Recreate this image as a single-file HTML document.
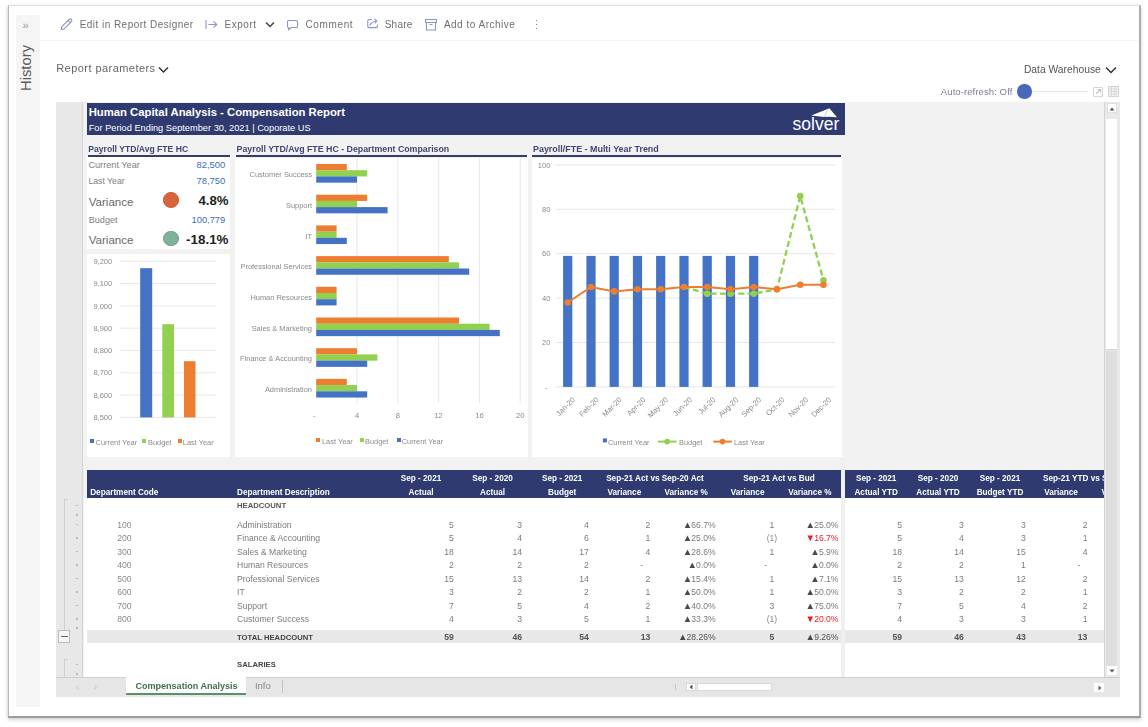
<!DOCTYPE html>
<html><head><meta charset="utf-8">
<style>
*{margin:0;padding:0;box-sizing:border-box}
html,body{width:1148px;height:727px;overflow:hidden;background:#fff;font-family:"Liberation Sans",sans-serif}
.a{position:absolute}
.t{position:absolute;white-space:nowrap;line-height:1}
svg{position:absolute;overflow:visible}
.tri{font-weight:400;font-size:9.6px;letter-spacing:-0.9px;color:#4a4a4a;line-height:0}
.red .tri{color:#e8202a}
</style></head><body><div id="w" style="position:absolute;left:0;top:0;width:1148px;height:727px;filter:blur(.55px)">
<div class="a" style="left:7.8px;top:5px;width:1132.8px;height:712.6px;background:#fff;border-left:1.7px solid #b6b6b6;border-right:2px solid #acacac;border-bottom:2.2px solid #9c9c9c;border-top:1px solid #e2e2e2;box-shadow:0 2px 4px rgba(0,0,0,.16),-1px 0 3px rgba(0,0,0,.08);filter:blur(.55px)"></div>
<div class="a" style="left:16.3px;top:15.0px;width:23.3px;height:692.3px;background:#f5f5f5;"></div>
<div class="t" style="left:22.5px;top:20px;color:#9a9a9a;font-size:11px">&raquo;</div>
<div class="t" style="left:18.5px;top:91.3px;color:#5a5a5a;font-size:14.8px;transform:rotate(-90deg);transform-origin:0 0">History</div>
<div class="a" style="left:40.0px;top:39.5px;width:1098.0px;height:1.0px;background:#f3f3f3;"></div>
<svg style="left:60px;top:18px" width="13" height="13" viewBox="0 0 13 13"><path d="M1.2 11.6L1.84 8.7L9.17 1.37A1.6 1.6 0 0 1 11.43 3.63L4.1 10.96Z M8.11 2.43L10.37 4.69" fill="none" stroke="#8a90bc" stroke-width="1.05" stroke-linejoin="round"/></svg>
<div class="t" style="left:79.7px;top:19.8px;font-size:10.0px;color:#6e6e6e;font-weight:400;letter-spacing:.46px">Edit in Report Designer</div>
<svg style="left:205px;top:19px" width="13" height="11" viewBox="0 0 13 11"><path d="M1 1V10M3.5 5.5H11.8M8.5 2.3L11.8 5.5L8.5 8.7" fill="none" stroke="#8d94c6" stroke-width="1.1"/></svg>
<div class="t" style="left:224.6px;top:19.8px;font-size:10.0px;color:#6e6e6e;font-weight:400;letter-spacing:.5px">Export</div>
<svg style="left:265px;top:20.5px" width="10" height="8" viewBox="0 0 10 8"><path d="M1 1.5L5 5.5L9 1.5" fill="none" stroke="#444" stroke-width="1.5"/></svg>
<svg style="left:286px;top:18.5px" width="13" height="13" viewBox="0 0 13 13"><path d="M2.6 1.5H10.4Q11.5 1.5 11.5 2.6V7.4Q11.5 8.5 10.4 8.5H5.2L2.6 10.9V8.5Q1.5 8.5 1.5 7.4V2.6Q1.5 1.5 2.6 1.5Z" fill="none" stroke="#8d94c6" stroke-width="1.1" stroke-linejoin="round"/></svg>
<div class="t" style="left:305.4px;top:19.8px;font-size:10.0px;color:#6e6e6e;font-weight:400;letter-spacing:.65px">Comment</div>
<svg style="left:366px;top:17px" width="13" height="13" viewBox="0 0 13 13"><path d="M6 2.5H2.8Q1.8 2.5 1.8 3.5V9.6Q1.8 10.6 2.8 10.6H10.4Q11.4 10.6 11.4 9.6V7.5M3.8 8.2Q5.5 4.6 10.5 4.2M8.4 1.8L10.8 4.1L8.8 6.4" fill="none" stroke="#8d94c6" stroke-width="1.1"/></svg>
<div class="t" style="left:384.7px;top:19.8px;font-size:10.0px;color:#6e6e6e;font-weight:400;letter-spacing:.25px">Share</div>
<svg style="left:425px;top:18px" width="12" height="13" viewBox="0 0 12 13"><path d="M0.5 1.5H11.5V4.5H0.5ZM1.5 4.5V12H10.5V4.5M4.5 6.5H7.5" fill="none" stroke="#8d94c6" stroke-width="1.1"/></svg>
<div class="t" style="left:443.9px;top:19.8px;font-size:10.0px;color:#6e6e6e;font-weight:400;letter-spacing:.5px">Add to Archive</div>
<div class="a" style="left:535.6px;top:19.5px;width:1.6px;height:1.6px;background:#888;box-shadow:0 4px 0 #888,0 8px 0 #888"></div>
<div class="t" style="left:56.2px;top:62.6px;font-size:11.0px;color:#666;font-weight:400;letter-spacing:.45px">Report parameters</div>
<svg style="left:158px;top:65.5px" width="11" height="8" viewBox="0 0 11 8"><path d="M1 1.5L5.5 6L10 1.5" fill="none" stroke="#333" stroke-width="1.5"/></svg>
<div class="t" style="left:1023.9px;top:65.4px;font-size:10.3px;color:#555;font-weight:400;">Data Warehouse</div>
<svg style="left:1105px;top:66px" width="12" height="8" viewBox="0 0 12 8"><path d="M1 1.5L6 6.5L11 1.5" fill="none" stroke="#333" stroke-width="1.5"/></svg>
<div class="t" style="left:940.8px;top:86.8px;font-size:9.6px;color:#7c8199;font-weight:400;letter-spacing:.05px">Auto-refresh: Off</div>
<div class="a" style="left:1030.0px;top:90.6px;width:58.0px;height:1.8px;background:#e4eaf5;"></div>
<div class="a" style="left:1017.4px;top:84.4px;width:14.5px;height:14.5px;border-radius:50%;background:#4868bb"></div>
<svg style="left:1093px;top:87px" width="10" height="10" viewBox="0 0 10 10"><path d="M0.5 0.5H9.5V9.5H0.5Z" fill="none" stroke="#d6d6d6"/><path d="M3 7L7.5 2.5M4.5 2.5H7.5V5.5" fill="none" stroke="#c4c4c4" stroke-width="1.1"/></svg>
<svg style="left:1108px;top:86px" width="11" height="11" viewBox="0 0 11 11"><rect x="0.5" y="0.5" width="10" height="10" fill="#f4f4f4" stroke="#d4d4d4"/><path d="M0.5 3H10.5M0.5 5.5H10.5M0.5 8H10.5M3.5 0.5V10.5M7 0.5V10.5" stroke="#d8d8d8" stroke-width="1"/></svg>
<div class="a" style="left:56.0px;top:102.0px;width:1064.0px;height:595.0px;background:#f2f2f2;"></div>
<div class="a" style="left:56.0px;top:102.0px;width:26.0px;height:576.0px;background:#e8e8e8;"></div>
<div class="a" style="left:81.8px;top:102.0px;width:1.2px;height:576.0px;background:#d4d4d4;"></div>
<div class="a" style="left:87.0px;top:103.0px;width:758.0px;height:32.0px;background:#2f3b70;"></div>
<div class="t" style="left:88.7px;top:106.9px;font-size:11.3px;color:#fff;font-weight:700;">Human Capital Analysis - Compensation Report</div>
<div class="t" style="left:88.7px;top:124.0px;font-size:9.25px;color:#fff;font-weight:400;">For Period Ending September 30, 2021 | Coporate US</div>
<div class="t" style="left:792.6px;top:116.2px;font-size:17.5px;color:#fff;font-weight:400;letter-spacing:0px">solver</div>
<svg style="left:811px;top:107px" width="28" height="12" viewBox="0 0 28 12"><path d="M0.3 8.5L18.4 1.2L26 10.3Q19 9.6 13.5 10Q6 9.3 0.3 8.5Z" fill="#fff"/><path d="M13.5 10L16.5 2.8" stroke="#b4bad4" stroke-width=".7"/></svg>
<div class="t" style="left:88.3px;top:145.3px;font-size:8.6px;color:#3d4772;font-weight:700;">Payroll YTD/Avg FTE HC</div>
<div class="a" style="left:88.0px;top:154.6px;width:142.0px;height:2.1px;background:#343e68;"></div>
<div class="a" style="left:87.0px;top:157.0px;width:143.0px;height:92.0px;background:#fff;"></div>
<div class="t" style="left:88.4px;top:160.8px;font-size:9.17px;color:#808080;font-weight:400;">Current Year</div>
<div class="t" style="right:922.8px;top:159.8px;font-size:9.4px;color:#3d6cc2;font-weight:400;text-align:right;">82,500</div>
<div class="t" style="left:88.4px;top:177.0px;font-size:8.7px;color:#808080;font-weight:400;">Last Year</div>
<div class="t" style="right:922.8px;top:176.0px;font-size:9.4px;color:#3d6cc2;font-weight:400;text-align:right;">78,750</div>
<div class="t" style="left:88.7px;top:196.7px;font-size:11.57px;color:#6a6a6a;font-weight:400;">Variance</div>
<div class="t" style="right:919.5px;top:194.3px;font-size:13.2px;color:#222;font-weight:700;text-align:right;">4.8%</div>
<div class="a" style="left:163.1px;top:192.3px;width:15.7px;height:15.7px;border-radius:50%;background:#d8633c;border:1px solid #c4552f"></div>
<div class="t" style="left:88.7px;top:215.8px;font-size:9.12px;color:#808080;font-weight:400;">Budget</div>
<div class="t" style="right:922.8px;top:216.3px;font-size:9.3px;color:#3d6cc2;font-weight:400;text-align:right;">100,779</div>
<div class="t" style="left:88.7px;top:235.3px;font-size:11.57px;color:#6a6a6a;font-weight:400;">Variance</div>
<div class="t" style="right:919.5px;top:232.9px;font-size:13.4px;color:#222;font-weight:700;text-align:right;">-18.1%</div>
<div class="a" style="left:163.1px;top:230.8px;width:15.7px;height:15.7px;border-radius:50%;background:#7fb19b;border:1px solid #6a9c86"></div>
<div class="a" style="left:87.0px;top:254.4px;width:143.0px;height:202.2px;background:#fff;"></div>
<svg style="left:0;top:0" width="1148" height="727"><rect x="120" y="260.8" width="96" height="1" fill="#e8e8e8"/><rect x="120" y="283.1" width="96" height="1" fill="#e8e8e8"/><rect x="120" y="305.4" width="96" height="1" fill="#e8e8e8"/><rect x="120" y="327.7" width="96" height="1" fill="#e8e8e8"/><rect x="120" y="350.0" width="96" height="1" fill="#e8e8e8"/><rect x="120" y="372.3" width="96" height="1" fill="#e8e8e8"/><rect x="120" y="394.6" width="96" height="1" fill="#e8e8e8"/><rect x="120" y="416.9" width="96" height="1" fill="#e8e8e8"/><rect x="140.2" y="268.2" width="12" height="149.2" fill="#4472c4"/><rect x="162.3" y="324.2" width="11.7" height="93.2" fill="#92d050"/><rect x="184" y="361.2" width="11.5" height="56.2" fill="#ed7d31"/></svg>
<div class="t" style="right:1035.8px;top:257.9px;font-size:7.5px;color:#8a8a8a;font-weight:400;text-align:right;">9,200</div>
<div class="t" style="right:1035.8px;top:280.2px;font-size:7.5px;color:#8a8a8a;font-weight:400;text-align:right;">9,100</div>
<div class="t" style="right:1035.8px;top:302.5px;font-size:7.5px;color:#8a8a8a;font-weight:400;text-align:right;">9,000</div>
<div class="t" style="right:1035.8px;top:324.8px;font-size:7.5px;color:#8a8a8a;font-weight:400;text-align:right;">8,900</div>
<div class="t" style="right:1035.8px;top:347.1px;font-size:7.5px;color:#8a8a8a;font-weight:400;text-align:right;">8,800</div>
<div class="t" style="right:1035.8px;top:369.4px;font-size:7.5px;color:#8a8a8a;font-weight:400;text-align:right;">8,700</div>
<div class="t" style="right:1035.8px;top:391.7px;font-size:7.5px;color:#8a8a8a;font-weight:400;text-align:right;">8,600</div>
<div class="t" style="right:1035.8px;top:414.0px;font-size:7.5px;color:#8a8a8a;font-weight:400;text-align:right;">8,500</div>
<div class="a" style="left:90.0px;top:438.6px;width:4.0px;height:4.0px;background:#4472c4;"></div>
<div class="t" style="left:95.6px;top:438.6px;font-size:7.4px;color:#8a8a8a;font-weight:400;">Current Year</div>
<div class="a" style="left:142.0px;top:438.6px;width:4.0px;height:4.0px;background:#92d050;"></div>
<div class="t" style="left:148.0px;top:438.6px;font-size:7.4px;color:#8a8a8a;font-weight:400;">Budget</div>
<div class="a" style="left:177.6px;top:438.6px;width:4.0px;height:4.0px;background:#ed7d31;"></div>
<div class="t" style="left:182.8px;top:438.6px;font-size:7.4px;color:#8a8a8a;font-weight:400;">Last Year</div>
<div class="t" style="left:236.6px;top:145.3px;font-size:8.8px;color:#3d4772;font-weight:700;">Payroll YTD/Avg FTE HC - Department Comparison</div>
<div class="a" style="left:236.0px;top:154.6px;width:291.0px;height:2.1px;background:#343e68;"></div>
<div class="a" style="left:234.5px;top:157.6px;width:293.0px;height:299.0px;background:#fff;"></div>
<svg style="left:0;top:0" width="1148" height="727"><rect x="356.5" y="157" width="1" height="246" fill="#e8e8e8"/><rect x="397.3" y="157" width="1" height="246" fill="#e8e8e8"/><rect x="438.1" y="157" width="1" height="246" fill="#e8e8e8"/><rect x="478.9" y="157" width="1" height="246" fill="#e8e8e8"/><rect x="519.7" y="157" width="1" height="246" fill="#e8e8e8"/><rect x="316.2" y="164.0" width="30.6" height="6.25" fill="#ed7d31"/><rect x="316.2" y="170.2" width="51.0" height="6.25" fill="#92d050"/><rect x="316.2" y="176.4" width="40.8" height="6.25" fill="#4472c4"/><rect x="316.2" y="194.7" width="51.0" height="6.25" fill="#ed7d31"/><rect x="316.2" y="200.9" width="40.8" height="6.25" fill="#92d050"/><rect x="316.2" y="207.1" width="71.4" height="6.25" fill="#4472c4"/><rect x="316.2" y="225.4" width="20.4" height="6.25" fill="#ed7d31"/><rect x="316.2" y="231.6" width="20.4" height="6.25" fill="#92d050"/><rect x="316.2" y="237.8" width="30.6" height="6.25" fill="#4472c4"/><rect x="316.2" y="256.1" width="132.6" height="6.25" fill="#ed7d31"/><rect x="316.2" y="262.3" width="142.8" height="6.25" fill="#92d050"/><rect x="316.2" y="268.5" width="153.0" height="6.25" fill="#4472c4"/><rect x="316.2" y="286.8" width="20.4" height="6.25" fill="#ed7d31"/><rect x="316.2" y="293.0" width="20.4" height="6.25" fill="#92d050"/><rect x="316.2" y="299.2" width="20.4" height="6.25" fill="#4472c4"/><rect x="316.2" y="317.5" width="142.8" height="6.25" fill="#ed7d31"/><rect x="316.2" y="323.7" width="173.4" height="6.25" fill="#92d050"/><rect x="316.2" y="329.9" width="183.6" height="6.25" fill="#4472c4"/><rect x="316.2" y="348.2" width="40.8" height="6.25" fill="#ed7d31"/><rect x="316.2" y="354.4" width="61.2" height="6.25" fill="#92d050"/><rect x="316.2" y="360.6" width="51.0" height="6.25" fill="#4472c4"/><rect x="316.2" y="378.9" width="30.6" height="6.25" fill="#ed7d31"/><rect x="316.2" y="385.1" width="40.8" height="6.25" fill="#92d050"/><rect x="316.2" y="391.3" width="51.0" height="6.25" fill="#4472c4"/></svg>
<div class="t" style="right:836.0px;top:171.2px;font-size:7.45px;color:#8a8a8a;font-weight:400;text-align:right;">Customer Success</div>
<div class="t" style="right:836.0px;top:201.9px;font-size:7.45px;color:#8a8a8a;font-weight:400;text-align:right;">Support</div>
<div class="t" style="right:836.0px;top:232.6px;font-size:7.45px;color:#8a8a8a;font-weight:400;text-align:right;">IT</div>
<div class="t" style="right:836.0px;top:263.3px;font-size:7.45px;color:#8a8a8a;font-weight:400;text-align:right;">Professional Services</div>
<div class="t" style="right:836.0px;top:294.0px;font-size:7.45px;color:#8a8a8a;font-weight:400;text-align:right;">Human Resources</div>
<div class="t" style="right:836.0px;top:324.7px;font-size:7.45px;color:#8a8a8a;font-weight:400;text-align:right;">Sales &amp; Marketing</div>
<div class="t" style="right:836.0px;top:355.4px;font-size:7.45px;color:#8a8a8a;font-weight:400;text-align:right;">Finance &amp; Accounting</div>
<div class="t" style="right:836.0px;top:386.1px;font-size:7.45px;color:#8a8a8a;font-weight:400;text-align:right;">Administration</div>
<div class="t" style="left:164.2px;width:300px;top:412.0px;font-size:7.6px;color:#8a8a8a;font-weight:400;text-align:center;">-</div>
<div class="t" style="left:207.0px;width:300px;top:412.0px;font-size:7.6px;color:#8a8a8a;font-weight:400;text-align:center;">4</div>
<div class="t" style="left:247.8px;width:300px;top:412.0px;font-size:7.6px;color:#8a8a8a;font-weight:400;text-align:center;">8</div>
<div class="t" style="left:288.6px;width:300px;top:412.0px;font-size:7.6px;color:#8a8a8a;font-weight:400;text-align:center;">12</div>
<div class="t" style="left:329.4px;width:300px;top:412.0px;font-size:7.6px;color:#8a8a8a;font-weight:400;text-align:center;">16</div>
<div class="t" style="left:370.2px;width:300px;top:412.0px;font-size:7.6px;color:#8a8a8a;font-weight:400;text-align:center;">20</div>
<div class="a" style="left:316.2px;top:437.8px;width:4.0px;height:4.0px;background:#ed7d31;"></div>
<div class="t" style="left:322.0px;top:438.0px;font-size:7.4px;color:#8a8a8a;font-weight:400;">Last Year</div>
<div class="a" style="left:359.9px;top:437.8px;width:4.0px;height:4.0px;background:#92d050;"></div>
<div class="t" style="left:365.0px;top:438.0px;font-size:7.4px;color:#8a8a8a;font-weight:400;">Budget</div>
<div class="a" style="left:396.5px;top:437.8px;width:4.0px;height:4.0px;background:#4472c4;"></div>
<div class="t" style="left:401.7px;top:438.0px;font-size:7.4px;color:#8a8a8a;font-weight:400;">Current Year</div>
<div class="t" style="left:533.0px;top:145.3px;font-size:8.94px;color:#3d4772;font-weight:700;">Payroll/FTE - Multi Year Trend</div>
<div class="a" style="left:531.8px;top:154.6px;width:309.5px;height:2.1px;background:#343e68;"></div>
<div class="a" style="left:531.5px;top:157.6px;width:310.5px;height:299.0px;background:#fff;"></div>
<svg style="left:0;top:0" width="1148" height="727"><rect x="556" y="386.4" width="279" height="1" fill="#e6e6e6"/><rect x="556" y="342.0" width="279" height="1" fill="#e6e6e6"/><rect x="556" y="297.6" width="279" height="1" fill="#e6e6e6"/><rect x="556" y="253.2" width="279" height="1" fill="#e6e6e6"/><rect x="556" y="208.8" width="279" height="1" fill="#e6e6e6"/><rect x="556" y="164.4" width="279" height="1" fill="#e6e6e6"/><rect x="563.1" y="255.9" width="9.2" height="131.0" fill="#4472c4"/><rect x="586.4" y="255.9" width="9.2" height="131.0" fill="#4472c4"/><rect x="609.6" y="255.9" width="9.2" height="131.0" fill="#4472c4"/><rect x="632.9" y="255.9" width="9.2" height="131.0" fill="#4472c4"/><rect x="656.1" y="255.9" width="9.2" height="131.0" fill="#4472c4"/><rect x="679.4" y="255.9" width="9.2" height="131.0" fill="#4472c4"/><rect x="702.6" y="255.9" width="9.2" height="131.0" fill="#4472c4"/><rect x="725.9" y="255.9" width="9.2" height="131.0" fill="#4472c4"/><rect x="749.1" y="255.9" width="9.2" height="131.0" fill="#4472c4"/><polyline points="684.0,287.0 707.2,293.7 730.5,293.7 753.7,293.7 777.0,289.2 800.2,196.0 823.5,280.3" fill="none" stroke="#92d050" stroke-width="2.3" stroke-dasharray="6,3.2"/><circle cx="707.2" cy="293.7" r="3.3" fill="#92d050"/><circle cx="730.5" cy="293.7" r="3.3" fill="#92d050"/><circle cx="753.7" cy="293.7" r="3.3" fill="#92d050"/><circle cx="777.0" cy="289.2" r="3.3" fill="#92d050"/><circle cx="800.2" cy="196.0" r="3.3" fill="#92d050"/><circle cx="823.5" cy="280.3" r="3.3" fill="#92d050"/><polyline points="567.7,302.5 591.0,287.0 614.2,291.4 637.5,289.2 660.7,289.2 684.0,287.0 707.2,287.0 730.5,289.2 753.7,287.0 777.0,289.2 800.2,284.8 823.5,284.8" fill="none" stroke="#ed7d31" stroke-width="2"/><circle cx="567.7" cy="302.5" r="3.3" fill="#ed7d31"/><circle cx="591.0" cy="287.0" r="3.3" fill="#ed7d31"/><circle cx="614.2" cy="291.4" r="3.3" fill="#ed7d31"/><circle cx="637.5" cy="289.2" r="3.3" fill="#ed7d31"/><circle cx="660.7" cy="289.2" r="3.3" fill="#ed7d31"/><circle cx="684.0" cy="287.0" r="3.3" fill="#ed7d31"/><circle cx="707.2" cy="287.0" r="3.3" fill="#ed7d31"/><circle cx="730.5" cy="289.2" r="3.3" fill="#ed7d31"/><circle cx="753.7" cy="287.0" r="3.3" fill="#ed7d31"/><circle cx="777.0" cy="289.2" r="3.3" fill="#ed7d31"/><circle cx="800.2" cy="284.8" r="3.3" fill="#ed7d31"/><circle cx="823.5" cy="284.8" r="3.3" fill="#ed7d31"/><rect x="602.9" y="438.4" width="4" height="4" fill="#4472c4"/><rect x="658" y="440.6" width="18.5" height="2" fill="#92d050"/><circle cx="667.2" cy="441.6" r="2.8" fill="#92d050"/><rect x="713.3" y="440.6" width="18.5" height="2" fill="#ed7d31"/><circle cx="722.5" cy="441.6" r="2.8" fill="#ed7d31"/></svg>
<div class="t" style="right:600.5px;top:383.6px;font-size:7.6px;color:#8a8a8a;font-weight:400;text-align:right;">-</div>
<div class="t" style="right:597.5px;top:339.2px;font-size:7.6px;color:#8a8a8a;font-weight:400;text-align:right;">20</div>
<div class="t" style="right:597.5px;top:294.8px;font-size:7.6px;color:#8a8a8a;font-weight:400;text-align:right;">40</div>
<div class="t" style="right:597.5px;top:250.4px;font-size:7.6px;color:#8a8a8a;font-weight:400;text-align:right;">60</div>
<div class="t" style="right:597.5px;top:206.0px;font-size:7.6px;color:#8a8a8a;font-weight:400;text-align:right;">80</div>
<div class="t" style="right:597.5px;top:161.6px;font-size:7.6px;color:#8a8a8a;font-weight:400;text-align:right;">100</div>
<div class="t" style="right:576.3px;top:395.5px;font-size:7.6px;color:#8a8a8a;transform:rotate(-45deg);transform-origin:100% 0">Jan-20</div>
<div class="t" style="right:553.0px;top:395.5px;font-size:7.6px;color:#8a8a8a;transform:rotate(-45deg);transform-origin:100% 0">Feb-20</div>
<div class="t" style="right:529.8px;top:395.5px;font-size:7.6px;color:#8a8a8a;transform:rotate(-45deg);transform-origin:100% 0">Mar-20</div>
<div class="t" style="right:506.5px;top:395.5px;font-size:7.6px;color:#8a8a8a;transform:rotate(-45deg);transform-origin:100% 0">Apr-20</div>
<div class="t" style="right:483.3px;top:395.5px;font-size:7.6px;color:#8a8a8a;transform:rotate(-45deg);transform-origin:100% 0">May-20</div>
<div class="t" style="right:460.0px;top:395.5px;font-size:7.6px;color:#8a8a8a;transform:rotate(-45deg);transform-origin:100% 0">Jun-20</div>
<div class="t" style="right:436.8px;top:395.5px;font-size:7.6px;color:#8a8a8a;transform:rotate(-45deg);transform-origin:100% 0">Jul-20</div>
<div class="t" style="right:413.5px;top:395.5px;font-size:7.6px;color:#8a8a8a;transform:rotate(-45deg);transform-origin:100% 0">Aug-20</div>
<div class="t" style="right:390.3px;top:395.5px;font-size:7.6px;color:#8a8a8a;transform:rotate(-45deg);transform-origin:100% 0">Sep-20</div>
<div class="t" style="right:367.0px;top:395.5px;font-size:7.6px;color:#8a8a8a;transform:rotate(-45deg);transform-origin:100% 0">Oct-20</div>
<div class="t" style="right:343.8px;top:395.5px;font-size:7.6px;color:#8a8a8a;transform:rotate(-45deg);transform-origin:100% 0">Nov-20</div>
<div class="t" style="right:320.5px;top:395.5px;font-size:7.6px;color:#8a8a8a;transform:rotate(-45deg);transform-origin:100% 0">Dec-20</div>
<div class="t" style="left:608.0px;top:438.5px;font-size:7.4px;color:#8a8a8a;font-weight:400;">Current Year</div>
<div class="t" style="left:679.0px;top:438.5px;font-size:7.4px;color:#8a8a8a;font-weight:400;">Budget</div>
<div class="t" style="left:734.0px;top:438.5px;font-size:7.4px;color:#8a8a8a;font-weight:400;">Last Year</div>
<div class="a" style="left:84.0px;top:498.0px;width:757.0px;height:179.0px;background:#fff;"></div>
<div class="a" style="left:845.0px;top:498.0px;width:259.0px;height:179.0px;background:#fff;"></div>
<div class="a" style="left:87.0px;top:470.0px;width:753.6px;height:28.0px;background:#2f3b70;"></div>
<div class="a" style="left:845.0px;top:470.0px;width:259.0px;height:28.0px;background:#2f3b70;"></div>
<div class="t" style="left:90.2px;top:488.6px;font-size:8.2px;color:#fff;font-weight:700;">Department Code</div>
<div class="t" style="left:237.0px;top:488.6px;font-size:8.2px;color:#fff;font-weight:700;">Department Description</div>
<div class="t" style="left:271.0px;width:300px;top:475.3px;font-size:8.2px;color:#fff;font-weight:700;text-align:center;">Sep - 2021</div>
<div class="t" style="left:271.0px;width:300px;top:488.6px;font-size:8.2px;color:#fff;font-weight:700;text-align:center;">Actual</div>
<div class="t" style="left:342.6px;width:300px;top:475.3px;font-size:8.2px;color:#fff;font-weight:700;text-align:center;">Sep - 2020</div>
<div class="t" style="left:342.6px;width:300px;top:488.6px;font-size:8.2px;color:#fff;font-weight:700;text-align:center;">Actual</div>
<div class="t" style="left:412.2px;width:300px;top:475.3px;font-size:8.2px;color:#fff;font-weight:700;text-align:center;">Sep - 2021</div>
<div class="t" style="left:412.2px;width:300px;top:488.6px;font-size:8.2px;color:#fff;font-weight:700;text-align:center;">Budget</div>
<div class="t" style="left:474.4px;width:300px;top:488.6px;font-size:8.2px;color:#fff;font-weight:700;text-align:center;">Variance</div>
<div class="t" style="left:536.2px;width:300px;top:488.6px;font-size:8.2px;color:#fff;font-weight:700;text-align:center;">Variance %</div>
<div class="t" style="left:597.6px;width:300px;top:488.6px;font-size:8.2px;color:#fff;font-weight:700;text-align:center;">Variance</div>
<div class="t" style="left:659.9px;width:300px;top:488.6px;font-size:8.2px;color:#fff;font-weight:700;text-align:center;">Variance %</div>
<div class="t" style="left:505.0px;width:300px;top:475.3px;font-size:8.2px;color:#fff;font-weight:700;text-align:center;">Sep-21 Act vs Sep-20 Act</div>
<div class="t" style="left:629.0px;width:300px;top:475.3px;font-size:8.2px;color:#fff;font-weight:700;text-align:center;">Sep-21 Act vs Bud</div>
<div class="t" style="left:726.2px;width:300px;top:475.3px;font-size:8.2px;color:#fff;font-weight:700;text-align:center;">Sep - 2021</div>
<div class="t" style="left:726.2px;width:300px;top:488.6px;font-size:8.2px;color:#fff;font-weight:700;text-align:center;">Actual YTD</div>
<div class="t" style="left:788.0px;width:300px;top:475.3px;font-size:8.2px;color:#fff;font-weight:700;text-align:center;">Sep - 2020</div>
<div class="t" style="left:788.0px;width:300px;top:488.6px;font-size:8.2px;color:#fff;font-weight:700;text-align:center;">Actual YTD</div>
<div class="t" style="left:850.0px;width:300px;top:475.3px;font-size:8.2px;color:#fff;font-weight:700;text-align:center;">Sep - 2021</div>
<div class="t" style="left:850.0px;width:300px;top:488.6px;font-size:8.2px;color:#fff;font-weight:700;text-align:center;">Budget YTD</div>
<div class="t" style="left:911.0px;width:300px;top:488.6px;font-size:8.2px;color:#fff;font-weight:700;text-align:center;">Variance</div>
<div class="t" style="left:1043.0px;top:475.3px;font-size:8.2px;color:#fff;font-weight:700;clip-path:inset(-4px calc(100% - 61px) -4px -4px)">Sep-21 YTD vs Sep-20 YTD</div>
<div class="t" style="left:973.0px;width:300px;top:488.6px;font-size:8.2px;color:#fff;font-weight:700;text-align:center;clip-path:inset(-4px calc(100% - 131px) -4px -4px)">Variance %</div>
<div class="t" style="left:237.0px;top:502.1px;font-size:7.7px;color:#555;font-weight:700;">HEADCOUNT</div>
<div class="t" style="left:-25.7px;width:300px;top:520.7px;font-size:8.6px;color:#8a8a8a;font-weight:400;text-align:center;">100</div>
<div class="t" style="left:237.0px;top:520.7px;font-size:8.6px;color:#7b7b7b;font-weight:400;">Administration</div>
<div class="t" style="right:694.3px;top:520.7px;font-size:8.6px;color:#7b7b7b;font-weight:400;text-align:right;">5</div>
<div class="t" style="right:626.0px;top:520.7px;font-size:8.6px;color:#7b7b7b;font-weight:400;text-align:right;">3</div>
<div class="t" style="right:559.2px;top:520.7px;font-size:8.6px;color:#7b7b7b;font-weight:400;text-align:right;">4</div>
<div class="t" style="right:497.8px;top:520.7px;font-size:8.6px;color:#7b7b7b;font-weight:400;text-align:right;">2</div>
<div class="t" style="right:432.3px;top:520.7px;font-size:8.6px;color:#7b7b7b;font-weight:400;text-align:right;"><b class=tri>&#9650;</b>66.7%</div>
<div class="t" style="right:373.8px;top:520.7px;font-size:8.6px;color:#7b7b7b;font-weight:400;text-align:right;">1</div>
<div class="t" style="right:309.5px;top:520.7px;font-size:8.6px;color:#7b7b7b;font-weight:400;text-align:right;"><b class=tri>&#9650;</b>25.0%</div>
<div class="t" style="right:246.0px;top:520.7px;font-size:8.6px;color:#7b7b7b;font-weight:400;text-align:right;">5</div>
<div class="t" style="right:184.3px;top:520.7px;font-size:8.6px;color:#7b7b7b;font-weight:400;text-align:right;">3</div>
<div class="t" style="right:122.3px;top:520.7px;font-size:8.6px;color:#7b7b7b;font-weight:400;text-align:right;">3</div>
<div class="t" style="right:60.6px;top:520.7px;font-size:8.6px;color:#7b7b7b;font-weight:400;text-align:right;">2</div>
<div class="t" style="left:-25.7px;width:300px;top:534.2px;font-size:8.6px;color:#8a8a8a;font-weight:400;text-align:center;">200</div>
<div class="t" style="left:237.0px;top:534.2px;font-size:8.6px;color:#7b7b7b;font-weight:400;">Finance &amp; Accounting</div>
<div class="t" style="right:694.3px;top:534.2px;font-size:8.6px;color:#7b7b7b;font-weight:400;text-align:right;">5</div>
<div class="t" style="right:626.0px;top:534.2px;font-size:8.6px;color:#7b7b7b;font-weight:400;text-align:right;">4</div>
<div class="t" style="right:559.2px;top:534.2px;font-size:8.6px;color:#7b7b7b;font-weight:400;text-align:right;">6</div>
<div class="t" style="right:497.8px;top:534.2px;font-size:8.6px;color:#7b7b7b;font-weight:400;text-align:right;">1</div>
<div class="t" style="right:432.3px;top:534.2px;font-size:8.6px;color:#7b7b7b;font-weight:400;text-align:right;"><b class=tri>&#9650;</b>25.0%</div>
<div class="t" style="right:370.8px;top:534.2px;font-size:8.6px;color:#8a8a8a;font-weight:400;text-align:right;">(1)</div>
<div class="t" style="right:309.5px;top:534.2px;font-size:8.6px;color:#e8202a;font-weight:400;text-align:right;"><span class=red><b class=tri>&#9660;</b>16.7%</span></div>
<div class="t" style="right:246.0px;top:534.2px;font-size:8.6px;color:#7b7b7b;font-weight:400;text-align:right;">5</div>
<div class="t" style="right:184.3px;top:534.2px;font-size:8.6px;color:#7b7b7b;font-weight:400;text-align:right;">4</div>
<div class="t" style="right:122.3px;top:534.2px;font-size:8.6px;color:#7b7b7b;font-weight:400;text-align:right;">3</div>
<div class="t" style="right:60.6px;top:534.2px;font-size:8.6px;color:#7b7b7b;font-weight:400;text-align:right;">1</div>
<div class="t" style="left:-25.7px;width:300px;top:547.7px;font-size:8.6px;color:#8a8a8a;font-weight:400;text-align:center;">300</div>
<div class="t" style="left:237.0px;top:547.7px;font-size:8.6px;color:#7b7b7b;font-weight:400;">Sales &amp; Marketing</div>
<div class="t" style="right:694.3px;top:547.7px;font-size:8.6px;color:#7b7b7b;font-weight:400;text-align:right;">18</div>
<div class="t" style="right:626.0px;top:547.7px;font-size:8.6px;color:#7b7b7b;font-weight:400;text-align:right;">14</div>
<div class="t" style="right:559.2px;top:547.7px;font-size:8.6px;color:#7b7b7b;font-weight:400;text-align:right;">17</div>
<div class="t" style="right:497.8px;top:547.7px;font-size:8.6px;color:#7b7b7b;font-weight:400;text-align:right;">4</div>
<div class="t" style="right:432.3px;top:547.7px;font-size:8.6px;color:#7b7b7b;font-weight:400;text-align:right;"><b class=tri>&#9650;</b>28.6%</div>
<div class="t" style="right:373.8px;top:547.7px;font-size:8.6px;color:#7b7b7b;font-weight:400;text-align:right;">1</div>
<div class="t" style="right:309.5px;top:547.7px;font-size:8.6px;color:#7b7b7b;font-weight:400;text-align:right;"><b class=tri>&#9650;</b>5.9%</div>
<div class="t" style="right:246.0px;top:547.7px;font-size:8.6px;color:#7b7b7b;font-weight:400;text-align:right;">18</div>
<div class="t" style="right:184.3px;top:547.7px;font-size:8.6px;color:#7b7b7b;font-weight:400;text-align:right;">14</div>
<div class="t" style="right:122.3px;top:547.7px;font-size:8.6px;color:#7b7b7b;font-weight:400;text-align:right;">15</div>
<div class="t" style="right:60.6px;top:547.7px;font-size:8.6px;color:#7b7b7b;font-weight:400;text-align:right;">4</div>
<div class="t" style="left:-25.7px;width:300px;top:561.2px;font-size:8.6px;color:#8a8a8a;font-weight:400;text-align:center;">400</div>
<div class="t" style="left:237.0px;top:561.2px;font-size:8.6px;color:#7b7b7b;font-weight:400;">Human Resources</div>
<div class="t" style="right:694.3px;top:561.2px;font-size:8.6px;color:#7b7b7b;font-weight:400;text-align:right;">2</div>
<div class="t" style="right:626.0px;top:561.2px;font-size:8.6px;color:#7b7b7b;font-weight:400;text-align:right;">2</div>
<div class="t" style="right:559.2px;top:561.2px;font-size:8.6px;color:#7b7b7b;font-weight:400;text-align:right;">2</div>
<div class="t" style="right:504.8px;top:561.2px;font-size:8.6px;color:#7b7b7b;font-weight:400;text-align:right;">-</div>
<div class="t" style="right:432.3px;top:561.2px;font-size:8.6px;color:#7b7b7b;font-weight:400;text-align:right;"><b class=tri>&#9650;</b>0.0%</div>
<div class="t" style="right:380.8px;top:561.2px;font-size:8.6px;color:#7b7b7b;font-weight:400;text-align:right;">-</div>
<div class="t" style="right:309.5px;top:561.2px;font-size:8.6px;color:#7b7b7b;font-weight:400;text-align:right;"><b class=tri>&#9650;</b>0.0%</div>
<div class="t" style="right:246.0px;top:561.2px;font-size:8.6px;color:#7b7b7b;font-weight:400;text-align:right;">2</div>
<div class="t" style="right:184.3px;top:561.2px;font-size:8.6px;color:#7b7b7b;font-weight:400;text-align:right;">2</div>
<div class="t" style="right:122.3px;top:561.2px;font-size:8.6px;color:#7b7b7b;font-weight:400;text-align:right;">1</div>
<div class="t" style="right:67.6px;top:561.2px;font-size:8.6px;color:#7b7b7b;font-weight:400;text-align:right;">-</div>
<div class="t" style="left:-25.7px;width:300px;top:574.7px;font-size:8.6px;color:#8a8a8a;font-weight:400;text-align:center;">500</div>
<div class="t" style="left:237.0px;top:574.7px;font-size:8.6px;color:#7b7b7b;font-weight:400;">Professional Services</div>
<div class="t" style="right:694.3px;top:574.7px;font-size:8.6px;color:#7b7b7b;font-weight:400;text-align:right;">15</div>
<div class="t" style="right:626.0px;top:574.7px;font-size:8.6px;color:#7b7b7b;font-weight:400;text-align:right;">13</div>
<div class="t" style="right:559.2px;top:574.7px;font-size:8.6px;color:#7b7b7b;font-weight:400;text-align:right;">14</div>
<div class="t" style="right:497.8px;top:574.7px;font-size:8.6px;color:#7b7b7b;font-weight:400;text-align:right;">2</div>
<div class="t" style="right:432.3px;top:574.7px;font-size:8.6px;color:#7b7b7b;font-weight:400;text-align:right;"><b class=tri>&#9650;</b>15.4%</div>
<div class="t" style="right:373.8px;top:574.7px;font-size:8.6px;color:#7b7b7b;font-weight:400;text-align:right;">1</div>
<div class="t" style="right:309.5px;top:574.7px;font-size:8.6px;color:#7b7b7b;font-weight:400;text-align:right;"><b class=tri>&#9650;</b>7.1%</div>
<div class="t" style="right:246.0px;top:574.7px;font-size:8.6px;color:#7b7b7b;font-weight:400;text-align:right;">15</div>
<div class="t" style="right:184.3px;top:574.7px;font-size:8.6px;color:#7b7b7b;font-weight:400;text-align:right;">13</div>
<div class="t" style="right:122.3px;top:574.7px;font-size:8.6px;color:#7b7b7b;font-weight:400;text-align:right;">12</div>
<div class="t" style="right:60.6px;top:574.7px;font-size:8.6px;color:#7b7b7b;font-weight:400;text-align:right;">2</div>
<div class="t" style="left:-25.7px;width:300px;top:588.2px;font-size:8.6px;color:#8a8a8a;font-weight:400;text-align:center;">600</div>
<div class="t" style="left:237.0px;top:588.2px;font-size:8.6px;color:#7b7b7b;font-weight:400;">IT</div>
<div class="t" style="right:694.3px;top:588.2px;font-size:8.6px;color:#7b7b7b;font-weight:400;text-align:right;">3</div>
<div class="t" style="right:626.0px;top:588.2px;font-size:8.6px;color:#7b7b7b;font-weight:400;text-align:right;">2</div>
<div class="t" style="right:559.2px;top:588.2px;font-size:8.6px;color:#7b7b7b;font-weight:400;text-align:right;">2</div>
<div class="t" style="right:497.8px;top:588.2px;font-size:8.6px;color:#7b7b7b;font-weight:400;text-align:right;">1</div>
<div class="t" style="right:432.3px;top:588.2px;font-size:8.6px;color:#7b7b7b;font-weight:400;text-align:right;"><b class=tri>&#9650;</b>50.0%</div>
<div class="t" style="right:373.8px;top:588.2px;font-size:8.6px;color:#7b7b7b;font-weight:400;text-align:right;">1</div>
<div class="t" style="right:309.5px;top:588.2px;font-size:8.6px;color:#7b7b7b;font-weight:400;text-align:right;"><b class=tri>&#9650;</b>50.0%</div>
<div class="t" style="right:246.0px;top:588.2px;font-size:8.6px;color:#7b7b7b;font-weight:400;text-align:right;">3</div>
<div class="t" style="right:184.3px;top:588.2px;font-size:8.6px;color:#7b7b7b;font-weight:400;text-align:right;">2</div>
<div class="t" style="right:122.3px;top:588.2px;font-size:8.6px;color:#7b7b7b;font-weight:400;text-align:right;">2</div>
<div class="t" style="right:60.6px;top:588.2px;font-size:8.6px;color:#7b7b7b;font-weight:400;text-align:right;">1</div>
<div class="t" style="left:-25.7px;width:300px;top:601.7px;font-size:8.6px;color:#8a8a8a;font-weight:400;text-align:center;">700</div>
<div class="t" style="left:237.0px;top:601.7px;font-size:8.6px;color:#7b7b7b;font-weight:400;">Support</div>
<div class="t" style="right:694.3px;top:601.7px;font-size:8.6px;color:#7b7b7b;font-weight:400;text-align:right;">7</div>
<div class="t" style="right:626.0px;top:601.7px;font-size:8.6px;color:#7b7b7b;font-weight:400;text-align:right;">5</div>
<div class="t" style="right:559.2px;top:601.7px;font-size:8.6px;color:#7b7b7b;font-weight:400;text-align:right;">4</div>
<div class="t" style="right:497.8px;top:601.7px;font-size:8.6px;color:#7b7b7b;font-weight:400;text-align:right;">2</div>
<div class="t" style="right:432.3px;top:601.7px;font-size:8.6px;color:#7b7b7b;font-weight:400;text-align:right;"><b class=tri>&#9650;</b>40.0%</div>
<div class="t" style="right:373.8px;top:601.7px;font-size:8.6px;color:#7b7b7b;font-weight:400;text-align:right;">3</div>
<div class="t" style="right:309.5px;top:601.7px;font-size:8.6px;color:#7b7b7b;font-weight:400;text-align:right;"><b class=tri>&#9650;</b>75.0%</div>
<div class="t" style="right:246.0px;top:601.7px;font-size:8.6px;color:#7b7b7b;font-weight:400;text-align:right;">7</div>
<div class="t" style="right:184.3px;top:601.7px;font-size:8.6px;color:#7b7b7b;font-weight:400;text-align:right;">5</div>
<div class="t" style="right:122.3px;top:601.7px;font-size:8.6px;color:#7b7b7b;font-weight:400;text-align:right;">4</div>
<div class="t" style="right:60.6px;top:601.7px;font-size:8.6px;color:#7b7b7b;font-weight:400;text-align:right;">2</div>
<div class="t" style="left:-25.7px;width:300px;top:615.2px;font-size:8.6px;color:#8a8a8a;font-weight:400;text-align:center;">800</div>
<div class="t" style="left:237.0px;top:615.2px;font-size:8.6px;color:#7b7b7b;font-weight:400;">Customer Success</div>
<div class="t" style="right:694.3px;top:615.2px;font-size:8.6px;color:#7b7b7b;font-weight:400;text-align:right;">4</div>
<div class="t" style="right:626.0px;top:615.2px;font-size:8.6px;color:#7b7b7b;font-weight:400;text-align:right;">3</div>
<div class="t" style="right:559.2px;top:615.2px;font-size:8.6px;color:#7b7b7b;font-weight:400;text-align:right;">5</div>
<div class="t" style="right:497.8px;top:615.2px;font-size:8.6px;color:#7b7b7b;font-weight:400;text-align:right;">1</div>
<div class="t" style="right:432.3px;top:615.2px;font-size:8.6px;color:#7b7b7b;font-weight:400;text-align:right;"><b class=tri>&#9650;</b>33.3%</div>
<div class="t" style="right:370.8px;top:615.2px;font-size:8.6px;color:#8a8a8a;font-weight:400;text-align:right;">(1)</div>
<div class="t" style="right:309.5px;top:615.2px;font-size:8.6px;color:#e8202a;font-weight:400;text-align:right;"><span class=red><b class=tri>&#9660;</b>20.0%</span></div>
<div class="t" style="right:246.0px;top:615.2px;font-size:8.6px;color:#7b7b7b;font-weight:400;text-align:right;">4</div>
<div class="t" style="right:184.3px;top:615.2px;font-size:8.6px;color:#7b7b7b;font-weight:400;text-align:right;">3</div>
<div class="t" style="right:122.3px;top:615.2px;font-size:8.6px;color:#7b7b7b;font-weight:400;text-align:right;">3</div>
<div class="t" style="right:60.6px;top:615.2px;font-size:8.6px;color:#7b7b7b;font-weight:400;text-align:right;">1</div>
<div class="a" style="left:87.4px;top:629.5px;width:753.2px;height:13.6px;background:#e8e8e8;"></div>
<div class="a" style="left:845.0px;top:629.5px;width:259.0px;height:13.6px;background:#e8e8e8;"></div>
<div class="t" style="left:237.0px;top:633.7px;font-size:7.7px;color:#444;font-weight:700;">TOTAL HEADCOUNT</div>
<div class="t" style="right:694.3px;top:632.7px;font-size:8.6px;color:#555;font-weight:700;text-align:right;">59</div>
<div class="t" style="right:626.0px;top:632.7px;font-size:8.6px;color:#555;font-weight:700;text-align:right;">46</div>
<div class="t" style="right:559.2px;top:632.7px;font-size:8.6px;color:#555;font-weight:700;text-align:right;">54</div>
<div class="t" style="right:497.8px;top:632.7px;font-size:8.6px;color:#555;font-weight:700;text-align:right;">13</div>
<div class="t" style="right:432.3px;top:632.7px;font-size:8.6px;color:#555;font-weight:400;text-align:right;"><b class=tri>&#9650;</b>28.26%</div>
<div class="t" style="right:373.8px;top:632.7px;font-size:8.6px;color:#555;font-weight:700;text-align:right;">5</div>
<div class="t" style="right:309.5px;top:632.7px;font-size:8.6px;color:#555;font-weight:400;text-align:right;"><b class=tri>&#9650;</b>9.26%</div>
<div class="t" style="right:246.0px;top:632.7px;font-size:8.6px;color:#555;font-weight:700;text-align:right;">59</div>
<div class="t" style="right:184.3px;top:632.7px;font-size:8.6px;color:#555;font-weight:700;text-align:right;">46</div>
<div class="t" style="right:122.3px;top:632.7px;font-size:8.6px;color:#555;font-weight:700;text-align:right;">43</div>
<div class="t" style="right:60.6px;top:632.7px;font-size:8.6px;color:#555;font-weight:700;text-align:right;">13</div>
<div class="t" style="left:237.0px;top:660.9px;font-size:7.7px;color:#444;font-weight:700;">SALARIES</div>
<div class="a" style="left:841.0px;top:458.0px;width:4.0px;height:219.0px;background:#f0f0f0;"></div>
<div class="a" style="left:63.5px;top:499.0px;width:1.0px;height:131.0px;background:#cfcfcf;"></div>
<div class="a" style="left:63.5px;top:499.0px;width:4.0px;height:1.0px;background:#cfcfcf;"></div>
<div class="a" style="left:76.3px;top:504.9px;width:1.4px;height:1.3px;background:#b8b8b8;"></div>
<div class="a" style="left:76.3px;top:514.4px;width:1.4px;height:1.3px;background:#b8b8b8;"></div>
<div class="a" style="left:76.3px;top:523.9px;width:1.4px;height:1.3px;background:#b8b8b8;"></div>
<div class="a" style="left:76.3px;top:537.4px;width:1.4px;height:1.3px;background:#b8b8b8;"></div>
<div class="a" style="left:76.3px;top:550.9px;width:1.4px;height:1.3px;background:#b8b8b8;"></div>
<div class="a" style="left:76.3px;top:564.4px;width:1.4px;height:1.3px;background:#b8b8b8;"></div>
<div class="a" style="left:76.3px;top:577.9px;width:1.4px;height:1.3px;background:#b8b8b8;"></div>
<div class="a" style="left:76.3px;top:591.4px;width:1.4px;height:1.3px;background:#b8b8b8;"></div>
<div class="a" style="left:76.3px;top:604.9px;width:1.4px;height:1.3px;background:#b8b8b8;"></div>
<div class="a" style="left:76.3px;top:618.4px;width:1.4px;height:1.3px;background:#b8b8b8;"></div>
<div class="a" style="left:76.3px;top:627.4px;width:1.4px;height:1.3px;background:#b8b8b8;"></div>
<div class="a" style="left:57.7px;top:630px;width:12.6px;height:12.6px;border:1px solid #bdbdbd;background:#f4f4f4"></div>
<div class="a" style="left:61.0px;top:635.8px;width:6.5px;height:1.5px;background:#666;"></div>
<div class="a" style="left:63.5px;top:658.5px;width:1.0px;height:19.0px;background:#cfcfcf;"></div>
<div class="a" style="left:63.5px;top:658.5px;width:4.0px;height:1.0px;background:#cfcfcf;"></div>
<div class="a" style="left:76.3px;top:664.1px;width:1.4px;height:1.3px;background:#b8b8b8;"></div>
<div class="a" style="left:76.3px;top:673.4px;width:1.4px;height:1.3px;background:#b8b8b8;"></div>
<div class="a" style="left:56.0px;top:677.0px;width:1064.0px;height:20.0px;background:#e6e6e6;"></div>
<div class="a" style="left:56.0px;top:677.0px;width:1064.0px;height:1.0px;background:#cfcfcf;"></div>
<div class="a" style="left:126.2px;top:677.0px;width:120.0px;height:16.5px;background:#fff;"></div>
<div class="a" style="left:126.2px;top:692.8px;width:120.0px;height:1.8px;background:#5a9169;"></div>
<div class="t" style="left:135.4px;top:682.0px;font-size:9.06px;color:#3f6f4c;font-weight:700;">Compensation Analysis</div>
<div class="t" style="left:254.9px;top:681.0px;font-size:9.47px;color:#8a8a8a;font-weight:400;">Info</div>
<div class="a" style="left:281.5px;top:680.0px;width:1.0px;height:13.0px;background:#c4c4c4;"></div>
<div class="t" style="left:76.0px;top:682.5px;font-size:9px;color:#c0c0c0;font-weight:400;">&#8249;</div>
<div class="t" style="left:94.0px;top:682.5px;font-size:9px;color:#c0c0c0;font-weight:400;">&#8250;</div>
<div class="a" style="left:675.0px;top:683.5px;width:1.0px;height:6.0px;background:#c8c8c8;"></div>
<div class="a" style="left:685.6px;top:682.7px;width:10.0px;height:8.5px;background:#fff;border:1px solid #d8d8d8"></div>
<svg style="left:688px;top:684px" width="6" height="6" viewBox="0 0 6 6"><path d="M4.5 0.5L1.5 3L4.5 5.5Z" fill="#555"/></svg>
<div class="a" style="left:696.5px;top:682.7px;width:75.7px;height:8.5px;background:#fff;border:1px solid #dadada"></div>
<div class="a" style="left:1094.0px;top:683.0px;width:10.0px;height:8.5px;background:#fff;"></div>
<svg style="left:1096.5px;top:684.5px" width="6" height="6" viewBox="0 0 6 6"><path d="M1.5 0.5L4.5 3L1.5 5.5Z" fill="#666"/></svg>
<div class="a" style="left:1104.3px;top:102.0px;width:15.7px;height:575.0px;background:#e9e9e9;border-left:1px solid #d4d4d4"></div>
<div class="a" style="left:1106.5px;top:103.2px;width:10.0px;height:10.2px;background:#fff;border:1px solid #e0e0e0"></div>
<svg style="left:1108.5px;top:106px" width="6" height="6" viewBox="0 0 6 6"><path d="M0.5 4.5L3 1.5L5.5 4.5Z" fill="#555"/></svg>
<div class="a" style="left:1106.0px;top:350.5px;width:11.0px;height:315.0px;background:#dedede;"></div>
<div class="a" style="left:1106.3px;top:119.2px;width:10.4px;height:231.3px;background:#fff;border-bottom:1px solid #d8d8d8"></div>
<div class="a" style="left:1106.5px;top:666.0px;width:10.0px;height:9.0px;background:#fff;"></div>
<svg style="left:1108.5px;top:668px" width="6" height="6" viewBox="0 0 6 6"><path d="M0.5 1.5L3 4.5L5.5 1.5Z" fill="#555"/></svg>
</div></body></html>
